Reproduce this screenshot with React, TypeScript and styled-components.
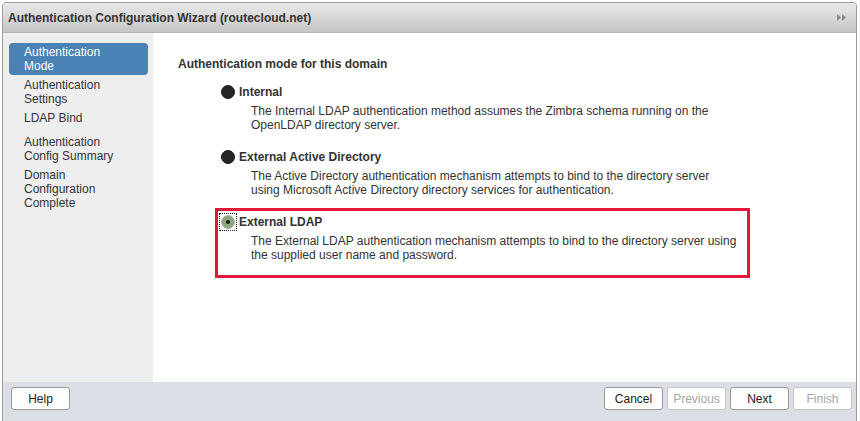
import styled, { createGlobalStyle } from "styled-components";

const GlobalStyle = createGlobalStyle`
  html, body {
    margin: 0;
    padding: 0;
    background: #ffffff;
    overflow: hidden;
  }
  body {
    font-family: "Liberation Sans", Arial, sans-serif;
    font-size: 12px;
    color: #333333;
  }
`;

const Dialog = styled.div`
  margin: 2px 0 0 2px;
  width: 855px;
  height: 432px;
  display: flex;
  flex-direction: column;
  border: 1px solid #9c9c9c;
  border-radius: 4px 4px 0 0;
  box-sizing: border-box;
  background: #ffffff;
  overflow: hidden;
`;

const TitleBar = styled.div`
  height: 29px;
  flex: none;
  display: flex;
  align-items: center;
  justify-content: space-between;
  padding: 0 10px 0 5px;
  background: linear-gradient(#e9e9e9, #c5c5c5);
  border-bottom: 1px solid #b4b4b4;
`;

const Title = styled.span`
  font-weight: bold;
  font-size: 12px;
  color: #333333;
`;

const Main = styled.div`
  display: flex;
  height: 349px;
  flex: none;
`;

const Nav = styled.div`
  width: 150px;
  flex: none;
  background: #eeeeee;
  padding: 10px 5px 0 6px;
  box-sizing: border-box;
  display: flex;
  flex-direction: column;
`;

const NavItem = styled.div<{ $active?: boolean; $gap?: number }>`
  padding: 2px 15px;
  margin-bottom: ${(p) => 1 + (p.$gap ?? 0)}px;
  line-height: 14px;
  font-size: 12px;
  border-radius: 4px;
  background: ${(p) => (p.$active ? "#4a82b6" : "transparent")};
  color: ${(p) => (p.$active ? "#ffffff" : "#333333")};
`;

const Content = styled.div`
  flex: 1;
  padding: 24px 0 0 25px;
  background: #ffffff;
`;

const Heading = styled.div`
  font-weight: bold;
  font-size: 12px;
  line-height: 14px;
  margin-bottom: 7px;
`;

const OptionList = styled.div`
  display: flex;
  flex-direction: column;
  margin-left: 37px;
`;

const Option = styled.div<{ $highlight?: boolean }>`
  width: 526px;
  border: 3px solid ${(p) => (p.$highlight ? "#e3163c" : "transparent")};
  padding: 4px 0 ${(p) => (p.$highlight ? 13 : 8)}px 3px;
`;

const OptionHead = styled.div`
  display: flex;
  align-items: center;
  gap: 4px;
  height: 14px;
`;

const RadioFocus = styled.span<{ $focused?: boolean }>`
  display: inline-flex;
  padding: 1px;
  margin: -2px;
  border: 1px dotted ${(p) => (p.$focused ? "#222222" : "transparent")};
`;

const Radio = styled.span<{ $checked?: boolean }>`
  width: 14px;
  height: 14px;
  border-radius: 50%;
  box-sizing: border-box;
  display: inline-flex;
  align-items: center;
  justify-content: center;
  background: ${(p) => (p.$checked ? "#8ba57c" : "#262626")};
  border: 1px solid ${(p) => (p.$checked ? "#a9bd9c" : "#1a1a1a")};

  &::after {
    content: "";
    display: ${(p) => (p.$checked ? "block" : "none")};
    width: 4px;
    height: 4px;
    border-radius: 50%;
    background: #1c1c1c;
  }
`;

const OptionLabel = styled.span`
  font-weight: bold;
  font-size: 12px;
`;

const OptionDesc = styled.div`
  margin: 5px 0 0 30px;
  line-height: 14px;
  font-size: 12px;
`;

const Footer = styled.div`
  flex: 1;
  background: #dbdee4;
  display: flex;
  justify-content: space-between;
  align-items: flex-start;
  padding: 5px 4px 0 8px;
`;

const ButtonGroup = styled.div`
  display: flex;
  gap: 4px;
`;

const Button = styled.button<{ $disabled?: boolean }>`
  width: 59px;
  height: 23px;
  box-sizing: border-box;
  font-family: "Liberation Sans", Arial, sans-serif;
  font-size: 12px;
  background: #ffffff;
  border: 1px solid ${(p) => (p.$disabled ? "#c4c6ca" : "#9a9a9a")};
  border-radius: 3px;
  color: ${(p) => (p.$disabled ? "#a6a6a6" : "#222222")};
  padding: 0;
`;

const Collapse = () => (
  <svg width="9" height="7" viewBox="0 0 9 7">
    <path d="M0 0 L4 3.5 L0 7 Z M5 0 L9 3.5 L5 7 Z" fill="#8a8a8a" />
  </svg>
);

export default function App() {
  return (
    <>
      <GlobalStyle />
      <Dialog>
        <TitleBar>
          <Title>Authentication Configuration Wizard (routecloud.net)</Title>
          <Collapse />
        </TitleBar>
        <Main>
          <Nav>
            <NavItem $active>
              Authentication
              <br />
              Mode
            </NavItem>
            <NavItem>
              Authentication
              <br />
              Settings
            </NavItem>
            <NavItem $gap={5}>LDAP Bind</NavItem>
            <NavItem>
              Authentication
              <br />
              Config Summary
            </NavItem>
            <NavItem>
              Domain
              <br />
              Configuration
              <br />
              Complete
            </NavItem>
          </Nav>
          <Content>
            <Heading>Authentication mode for this domain</Heading>
            <OptionList>
              <Option>
                <OptionHead>
                  <RadioFocus>
                    <Radio />
                  </RadioFocus>
                  <OptionLabel>Internal</OptionLabel>
                </OptionHead>
                <OptionDesc>
                  The Internal LDAP authentication method assumes the Zimbra schema running on the
                  <br />
                  OpenLDAP directory server.
                </OptionDesc>
              </Option>
              <Option>
                <OptionHead>
                  <RadioFocus>
                    <Radio />
                  </RadioFocus>
                  <OptionLabel>External Active Directory</OptionLabel>
                </OptionHead>
                <OptionDesc>
                  The Active Directory authentication mechanism attempts to bind to the directory server
                  <br />
                  using Microsoft Active Directory directory services for authentication.
                </OptionDesc>
              </Option>
              <Option $highlight>
                <OptionHead>
                  <RadioFocus $focused>
                    <Radio $checked />
                  </RadioFocus>
                  <OptionLabel>External LDAP</OptionLabel>
                </OptionHead>
                <OptionDesc>
                  The External LDAP authentication mechanism attempts to bind to the directory server using
                  <br />
                  the supplied user name and password.
                </OptionDesc>
              </Option>
            </OptionList>
          </Content>
        </Main>
        <Footer>
          <Button>Help</Button>
          <ButtonGroup>
            <Button>Cancel</Button>
            <Button $disabled>Previous</Button>
            <Button>Next</Button>
            <Button $disabled>Finish</Button>
          </ButtonGroup>
        </Footer>
      </Dialog>
    </>
  );
}
